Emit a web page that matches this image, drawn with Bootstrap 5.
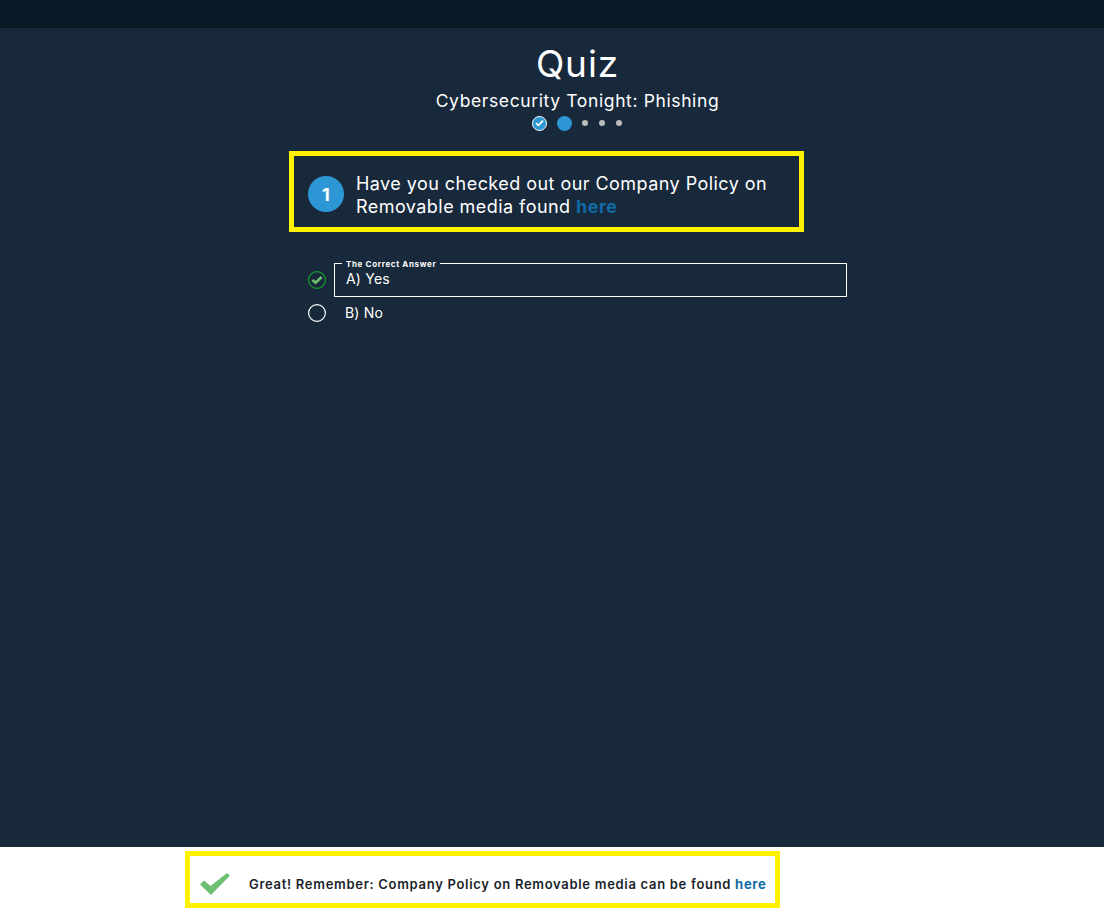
<!DOCTYPE html>
<html lang="en">

<head>
    <meta charset="UTF-8">
    <meta name="viewport" content="width=device-width, initial-scale=1.0">
    <title>Quiz</title>
    <link href="https://cdn.jsdelivr.net/npm/bootstrap@5.3.3/dist/css/bootstrap.min.css" rel="stylesheet">
    <style>
        html, body { height: 911px; overflow: hidden; }
        body { font-family: Inter, "Liberation Sans", sans-serif; background: #fff; color: #fff; }
        .top-strip { height: 28px; background: #071a25; }
        .quiz-main { height: 819px; background: #18293b; padding-top: 14px; }
        .quiz-head { padding-left: 51px; }
        .quiz-title { font-size: 37px; line-height: 44px; font-weight: 400; margin: 0; letter-spacing: .9px; }
        .quiz-sub { font-size: 17.5px; line-height: 22px; margin: 4px 0 0; letter-spacing: .62px; }
        .steps { height: 16px; margin: 3px 2px 0 0; gap: 10px; }
        .step-done { width: 15px; height: 15px; border-radius: 50%; background: #2d97d6; border: 1px solid #fff; }
        .step-now { width: 15px; height: 15px; border-radius: 50%; background: #2d97d6; }
        .step-dot { width: 6px; height: 6px; border-radius: 50%; background: #bcbcbc; }
        .step-dot + .step-dot { margin-left: 1px; }
        .q-wrap { width: 558px; margin-left: 289px; }
        .q-box { width: 515px; height: 81px; margin-top: 20px; border: 5px solid #fff200; padding: 5px 0 0 14px; gap: 12px; }
        .q-num { width: 36px; height: 36px; border-radius: 50%; background: #2d97d6; font-size: 18px; font-weight: 700; flex: none; }
        .q-text { font-size: 18px; line-height: 23px; letter-spacing: .45px; padding-top: 1px; }
        .q-text a, .note-text a { color: #0f6aa6; font-weight: 700; text-decoration: none; }
        .answers { margin-top: 31px; padding-left: 19px; font-size: 14px; letter-spacing: .2px; }
        .answer-row { height: 34px; }
        .answer-row + .answer-row { height: 32px; }
        .radio-ring { width: 18px; height: 18px; flex: none; margin-right: 8px; }
        .answer-box { width: 513px; height: 34px; padding: 6px 11px 0; line-height: 18px; position: relative; border: 1px solid #fff; }
        .answer-plain { padding-left: 11px; line-height: 18px; }
        .answer-tag { position: absolute; top: -5px; left: 7px; padding: 0 4px; background: #18293b; font-size: 8px; line-height: 10px; font-weight: 700; letter-spacing: .65px; }
        .note-bar { height: 64px; padding-left: 185px; padding-top: 4px; color: #1b1f29; }
        .note-box { width: 595px; height: 57px; border: 5px solid #fff200; padding: 8px 0 0 10px; gap: 19px; }
        .note-text { font-size: 13px; font-weight: 600; letter-spacing: .7px; white-space: nowrap; padding-top: 2px; }
    </style>
</head>

<body>
    <div class="top-strip"></div>

    <div class="quiz-main">
        <div class="quiz-head text-center">
            <h1 class="quiz-title">Quiz</h1>
            <p class="quiz-sub">Cybersecurity Tonight: Phishing</p>
            <div class="steps d-flex justify-content-center align-items-center">
                <span class="step-done d-flex align-items-center justify-content-center">
                    <svg width="9" height="8" viewBox="0 0 9 8"><path d="M1 4.2 3.4 6.3 8 1.6" fill="none" stroke="#fff" stroke-width="1.7"/></svg>
                </span>
                <span class="step-now"></span>
                <span class="step-dot"></span>
                <span class="step-dot"></span>
                <span class="step-dot"></span>
            </div>
        </div>

        <div class="q-wrap">
            <div class="q-box d-flex align-items-center">
                <div class="q-num d-flex align-items-center justify-content-center">1</div>
                <div class="q-text">Have you checked out our Company Policy on Removable media found <a href="#">here</a></div>
            </div>

            <div class="answers">
                <div class="answer-row d-flex align-items-center">
                    <svg class="radio-ring" viewBox="0 0 18 18">
                        <circle cx="9" cy="9" r="8.4" fill="none" stroke="#16a22c" stroke-width="1.2"/>
                        <path d="M4.4 9 7.6 11.8 13.6 6" fill="none" stroke="#6fbf73" stroke-width="2.6"/>
                    </svg>
                    <div class="answer-box">
                        <span class="answer-tag">The Correct Answer</span>
                        A) Yes
                    </div>
                </div>
                <div class="answer-row d-flex align-items-center">
                    <svg class="radio-ring" viewBox="0 0 18 18">
                        <circle cx="9" cy="9" r="8.4" fill="none" stroke="#fff" stroke-width="1.2"/>
                    </svg>
                    <div class="answer-plain">B) No</div>
                </div>
            </div>
        </div>
    </div>

    <div class="note-bar">
        <div class="note-box d-flex align-items-center">
            <svg width="30" height="22" viewBox="0 0 30 22" class="flex-shrink-0">
                <path d="M0 11.5 4 7.5 10.5 13 27 0 30 2.5 11 22Z" fill="#6fbf73"/>
            </svg>
            <div class="note-text">Great! Remember: Company Policy on Removable media can be found <a href="#">here</a></div>
        </div>
    </div>

    <script src="https://cdn.jsdelivr.net/npm/bootstrap@5.3.3/dist/js/bootstrap.bundle.min.js"></script>
</body>

</html>
